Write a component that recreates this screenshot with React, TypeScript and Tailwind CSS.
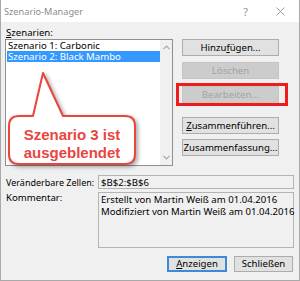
import React from "react";

function Btn({
  children,
  disabled,
  primary,
  className = "",
}: {
  children: React.ReactNode;
  disabled?: boolean;
  primary?: boolean;
  className?: string;
}) {
  const base =
    "flex items-center justify-center leading-none whitespace-nowrap select-none box-border ";
  const look = disabled
    ? "bg-[#cccccc] border border-[#c4c4c4] text-[#a3a3a3]"
    : primary
    ? "bg-[#e1e1e1] border-2 border-[#3d8ad6] text-black"
    : "bg-[#e1e1e1] border border-[#adadad] text-black";
  return <div className={base + look + " " + className}>{children}</div>;
}

function Chevron({ up }: { up?: boolean }) {
  return (
    <svg width="7" height="5" viewBox="0 0 7 5" className="block">
      <path
        d={up ? "M0.5 4.2 L3.5 1 L6.5 4.2" : "M0.5 0.8 L3.5 4 L6.5 0.8"}
        fill="none"
        stroke="#a6a6a6"
        strokeWidth="1.1"
      />
    </svg>
  );
}

export default function App() {
  return (
    <div className="w-[300px] h-[281px] flex flex-col border-l border-r border-b border-[#a9a9a9] bg-[#f0f0f0] font-['Noto_Sans',sans-serif] text-[9.6px] leading-[11px] text-black overflow-hidden whitespace-nowrap">
      {/* title bar */}
      <div className="h-[22px] shrink-0 bg-white flex items-center pl-[3px]">
        <span className="text-[#8c8c8c] text-[9.2px]">Szenario-Manager</span>
        <span className="ml-auto text-[#9a9a9a] text-[11px] leading-none mr-[28px]">?</span>
        <svg width="9" height="9" viewBox="0 0 9 9" className="mr-[14px]">
          <path d="M0.5 0.5 L8.5 8.5 M8.5 0.5 L0.5 8.5" stroke="#9a9a9a" strokeWidth="1" />
        </svg>
      </div>

      {/* body */}
      <div className="flex-1 flex flex-col pl-[4px] pr-[5px] pt-[4px]">
        <div className="h-[13px] leading-[13px] pl-[1px]">
          <u className="underline-offset-[1px]">S</u>zenarien:
        </div>

        <div className="flex">
          {/* listbox + callout */}
          <div className="relative w-[168px]">
            <div className="h-[127px] border border-[#8f8f8f] bg-white flex">
              <div className="flex-1">
                <div className="h-[11px] leading-[10px] pt-[0.5px] pl-[2px]">Szenario 1: Carbonic</div>
                <div className="h-[11px] leading-[10px] pt-[0.5px] ml-[1px] pl-[1px] bg-[#3399ff] text-white">
                  Szenario 2: Black Mambo
                </div>
              </div>
              <div className="w-[12px] bg-[#f0f0f0] flex flex-col items-center justify-between pt-[5px] pb-[5px]">
                <Chevron up />
                <Chevron />
              </div>
            </div>

            {/* annotation callout */}
            <svg
              width="140"
              height="135"
              viewBox="0 0 140 135"
              className="absolute left-0 top-0 overflow-visible"
              style={{ filter: "drop-shadow(2px 2px 2px rgba(0,0,0,0.35))" }}
            >
              <path
                d="M14 77 L28 77 L38 34 L58 77 L120 77 Q130 77 130 87 L130 115 Q130 125 120 125 L14 125 Q4 125 4 115 L4 87 Q4 77 14 77 Z"
                fill="#ffffff"
                stroke="#e8463f"
                strokeWidth="2"
                strokeLinejoin="round"
              />
            </svg>
            <div className="absolute left-[4px] top-[87px] w-[126px] text-center font-['Liberation_Sans',Arial,sans-serif] font-bold text-[15px] leading-[18px] text-[#e8463f]">
              Szenario 3 ist
              <br />
              ausgeblendet
            </div>
          </div>

          {/* buttons */}
          <div className="ml-[9px] w-[97px] flex flex-col">
            <Btn className="h-[17px]">
              Hinzu<u className="underline-offset-[1px]">f</u>ügen...
            </Btn>
            <Btn disabled className="h-[17px] mt-[6px]">
              Löschen
            </Btn>
            <div className="relative mt-[7px]">
              <Btn disabled className="h-[17px]">
                Bearbeiten...
              </Btn>
              <div className="absolute left-[-6px] right-[-9px] top-[-3px] bottom-[-3px] border-[3px] border-[#ee1c1c]" />
            </div>
            <Btn className="h-[17px] mt-[14px]">
              <u className="underline-offset-[1px]">Z</u>usammenführen...
            </Btn>
            <Btn className="h-[17px] mt-[5px]">Zusammenfassung...</Btn>
          </div>
        </div>

        {/* changing cells */}
        <div className="flex items-center mt-[9px]">
          <div className="w-[93px] pl-[1px] text-[9px]">Veränderbare Zellen:</div>
          <div className="w-[196px] h-[14px] border border-[#b4b4b4] bg-[#f0f0f0] flex items-center pl-[2px]">
            $B$2:$B$6
          </div>
        </div>

        {/* comment */}
        <div className="flex mt-[3px]">
          <div className="w-[93px] pl-[1px]">Kommentar:</div>
          <div className="w-[196px] h-[56px] border border-[#b4b4b4] bg-[#f0f0f0] pl-[2px] pt-[1px] leading-[12px]">
            <div>Erstellt von Martin Weiß am 01.04.2016</div>
            <div>Modifiziert von Martin Weiß am 01.04.2016</div>
          </div>
        </div>

        {/* bottom buttons */}
        <div className="flex justify-end mt-[8px] pr-[1px]">
          <Btn primary className="w-[60px] h-[16px]">
            <u className="underline-offset-[1px]">A</u>nzeigen
          </Btn>
          <Btn className="w-[59px] h-[16px] ml-[7px]">Schließen</Btn>
        </div>
      </div>
    </div>
  );
}
